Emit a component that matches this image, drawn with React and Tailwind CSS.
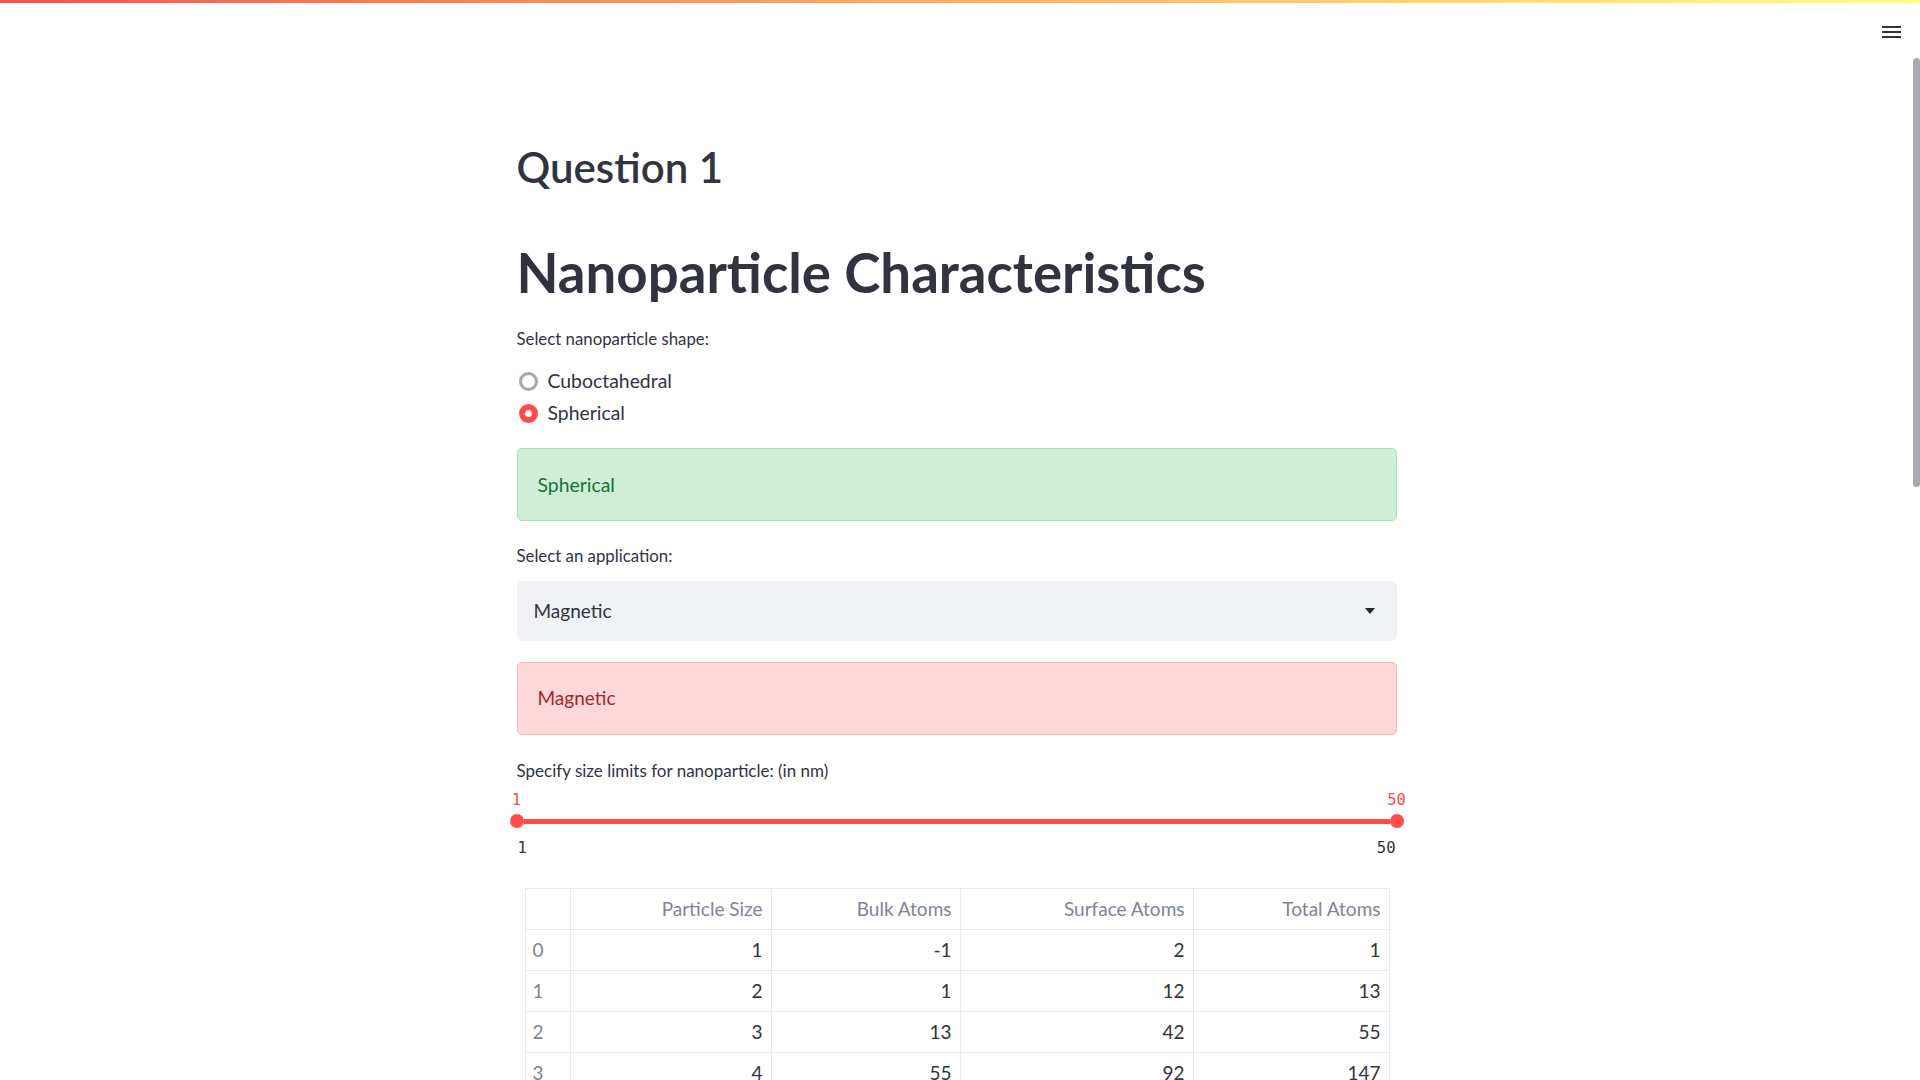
import React, { useState } from "react";

const shapes = ["Cuboctahedral", "Spherical"];

// surface = 10n^2 - 20n + 12, total = magic numbers
const rows = [1, 2, 3, 4, 5, 6].map((n) => {
  const total = (10 * n * n * n - 15 * n * n + 11 * n - 3) / 3;
  const surface = 10 * n * n - 20 * n + 12;
  return { size: n, bulk: total - surface, surface, total };
});

function Radio({ label, checked, onClick }) {
  return (
    <div className="flex items-center h-[32px] cursor-pointer" onClick={onClick}>
      <div className="w-[20px] h-[20px] ml-[2px] flex items-center justify-center">
        {checked ? (
          <div className="w-[19px] h-[19px] rounded-full bg-[#ff4b4b] flex items-center justify-center">
            <div className="w-[7px] h-[7px] rounded-full bg-white" />
          </div>
        ) : (
          <div className="w-[19px] h-[19px] rounded-full border-[3px] border-[#a3a8b4] bg-white" />
        )}
      </div>
      <span className="ml-[9px] text-[19.4px] leading-[24px]">{label}</span>
    </div>
  );
}

export default function App() {
  const [shape, setShape] = useState("Spherical");

  return (
    <div
      className="h-screen overflow-hidden bg-white text-[#31333f] flex flex-col"
      style={{ fontFamily: "Lato, 'Noto Sans', sans-serif" }}
    >
      <div className="h-[3px] shrink-0 bg-gradient-to-r from-[#ff4b4b] to-[#ffff80]" />
      <div className="flex flex-1 min-h-0">
        <div className="flex-1 min-w-0 flex flex-col">
          <header className="h-[57px] shrink-0 flex justify-end pt-[22px] pr-[12px]">
            <div className="flex flex-col gap-[3px] pt-[1px]">
              <span className="block w-[19px] h-[2px] bg-[#31333f]" />
              <span className="block w-[19px] h-[2px] bg-[#31333f]" />
              <span className="block w-[19px] h-[2px] bg-[#31333f]" />
            </div>
          </header>

          <main className="w-[880px] mx-auto pt-[81px]">
            <h2 className="text-[42px] leading-[52px] font-semibold">Question 1</h2>
            <h1 className="mt-[47px] text-[54.6px] leading-[64px] font-bold">
              Nanoparticle Characteristics
            </h1>

            <p className="mt-[25px] text-[16.8px] leading-[20px]">
              Select nanoparticle shape:
            </p>
            <div className="mt-[16px] flex flex-col">
              {shapes.map((s) => (
                <Radio key={s} label={s} checked={shape === s} onClick={() => setShape(s)} />
              ))}
            </div>

            <div className="mt-[19px] h-[73px] flex items-center px-[20px] rounded-[5px] border border-[#ace0bb] bg-[#ceeed8] text-[#177233] text-[19.4px]">
              {shape}
            </div>

            <p className="mt-[25px] text-[16.8px] leading-[20px]">Select an application:</p>
            <div className="mt-[15px] h-[60px] flex items-center justify-between pl-[17px] pr-[22px] rounded-[6px] bg-[#f0f2f6] text-[19px]">
              <span>Magnetic</span>
              <svg width="10" height="6" viewBox="0 0 10 6">
                <polygon points="0,0 10,0 5,6" fill="#262730" />
              </svg>
            </div>

            <div className="mt-[21px] h-[73px] flex items-center px-[20px] rounded-[5px] border border-[#f6b5b8] bg-[#ffd8d9] text-[#a1262f] text-[19px]">
              Magnetic
            </div>

            <p className="mt-[26px] text-[17px] leading-[20px]">
              Specify size limits for nanoparticle: (in nm)
            </p>

            <div style={{ fontFamily: "'DejaVu Sans Mono', monospace" }}>
              <div className="mt-[9px] -mx-[7px] flex justify-between text-[15.5px] leading-[20px] text-[#ff4b4b]">
                <span className="w-[14px] flex justify-center">1</span>
                <span className="w-[14px] flex justify-center">50</span>
              </div>
              <div className="-mx-[7px] h-[22px] flex items-center">
                <div className="w-[14px] h-[14px] rounded-full bg-[#ff4b4b]" />
                <div className="flex-1 h-[5px] bg-[#ff4b4b]" />
                <div className="w-[14px] h-[14px] rounded-full bg-[#ff4b4b]" />
              </div>
              <div className="mt-[6px] flex justify-between pl-[1px] pr-[1px] text-[15.5px] leading-[20px] text-[#31333f]">
                <span>1</span>
                <span>50</span>
              </div>
            </div>

            <table className="mt-[30px] ml-[8px] w-[864px] table-fixed border-collapse text-[19px]">
              <colgroup>
                <col className="w-[45px]" />
                <col className="w-[201px]" />
                <col className="w-[189px]" />
                <col className="w-[233px]" />
                <col className="w-[196px]" />
              </colgroup>
              <thead>
                <tr className="h-[41px] text-[#808495]">
                  <th className="border border-[#e6e9ef] font-normal" />
                  <th className="border border-[#e6e9ef] font-normal text-right pr-[8px]">Particle Size</th>
                  <th className="border border-[#e6e9ef] font-normal text-right pr-[8px]">Bulk Atoms</th>
                  <th className="border border-[#e6e9ef] font-normal text-right pr-[8px]">Surface Atoms</th>
                  <th className="border border-[#e6e9ef] font-normal text-right pr-[8px]">Total Atoms</th>
                </tr>
              </thead>
              <tbody>
                {rows.map((r, i) => (
                  <tr key={i} className="h-[41px]">
                    <td className="border border-[#e6e9ef] pl-[7px] text-[#808495]">{i}</td>
                    <td className="border border-[#e6e9ef] text-right pr-[8px]">{r.size}</td>
                    <td className="border border-[#e6e9ef] text-right pr-[8px]">{r.bulk}</td>
                    <td className="border border-[#e6e9ef] text-right pr-[8px]">{r.surface}</td>
                    <td className="border border-[#e6e9ef] text-right pr-[8px]">{r.total}</td>
                  </tr>
                ))}
              </tbody>
            </table>
          </main>
        </div>

        <aside className="w-[7px] shrink-0 pt-[55px]">
          <div className="h-[429px] rounded-full bg-[#a9a9b0]" />
        </aside>
      </div>
    </div>
  );
}
